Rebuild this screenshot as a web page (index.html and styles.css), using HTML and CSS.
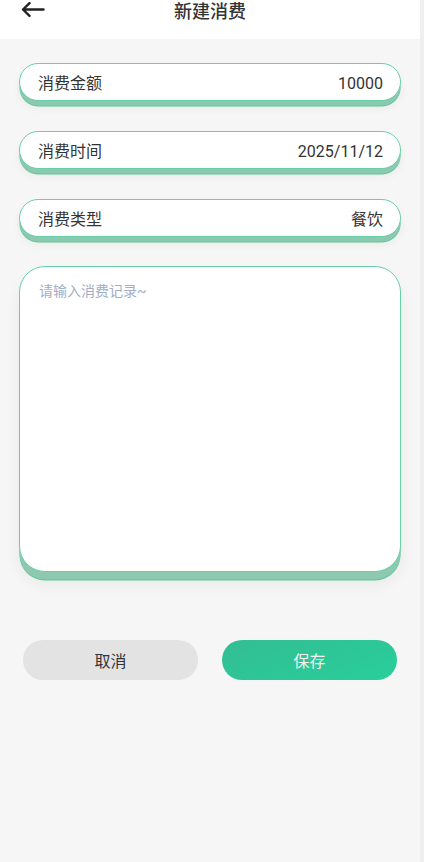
FILE: index.html
```html
<!DOCTYPE html>
<html lang="zh-CN">
<head>
<meta charset="utf-8">
<title>新建消费</title>
<link rel="stylesheet" href="styles.css">
</head>
<body>
<div class="screen">
  <div class="app">
    <header class="topbar">
      <button class="back" aria-label="返回">
        <svg width="24" height="16" viewBox="0 0 24 16"><path d="M22.5 7.5H2 M8.5 1.2L2 7.5l6.5 6.3" fill="none" stroke="#222" stroke-width="2.4" stroke-linecap="round" stroke-linejoin="round"/></svg>
      </button>
      <h1 class="title">新建消费</h1>
    </header>
    <main class="content">
      <div class="field">
        <span class="label">消费金额</span>
        <span class="value">10000</span>
      </div>
      <div class="field">
        <span class="label">消费时间</span>
        <span class="value">2025/11/12</span>
      </div>
      <div class="field">
        <span class="label">消费类型</span>
        <span class="value">餐饮</span>
      </div>
      <div class="memo">
        <span class="placeholder">请输入消费记录~</span>
      </div>
      <div class="actions">
        <button class="btn cancel">取消</button>
        <button class="btn save">保存</button>
      </div>
    </main>
  </div>
  <div class="rail"></div>
</div>
</body>
</html>
```
FILE: styles.css
```css
* { box-sizing: border-box; }
html, body { margin: 0; padding: 0; }
body {
  font-family: Roboto, "Noto Sans CJK SC", "Noto Sans", sans-serif;
  color: #333;
  background: #f6f6f6;
}
.screen {
  display: grid;
  grid-template-columns: 420px 4px;
  min-height: 862px;
}
.rail { background: #efefef; }
.app { background: #f6f6f6; }
.topbar {
  height: 39px;
  background: #fff;
  position: relative;
  display: flex;
  justify-content: center;
}
.back {
  position: absolute;
  left: 21px;
  top: 2px;
  border: 0;
  background: none;
  padding: 0;
  width: 24px;
  height: 16px;
}
.back svg { display: block; }
.title {
  margin: 0;
  font-size: 18px;
  font-weight: 500;
  line-height: 24px;
  color: #333;
}
.content {
  padding: 24px 19px 0;
  display: flex;
  flex-direction: column;
}
.field {
  height: 38px;
  border: 1.5px solid #66d0a6;
  border-radius: 19px;
  background: #fff;
  box-shadow: 0 5px 0 -0.5px #8cc9b0, 0 6px 0 -0.5px #5ec699, 0 7px 10px rgba(0,0,0,0.05);
  display: flex;
  align-items: center;
  justify-content: space-between;
  padding: 4px 17px 0 18px;
  margin-bottom: 30px;
  font-size: 16px;
}
.label, .value { color: #333; line-height: 20px; }
.memo {
  height: 306px;
  border: 1.5px solid #66d0a6;
  border-radius: 26px;
  background: #fff;
  box-shadow: 0 8px 0 -0.5px #8cc9b0, 0 9px 0 -0.5px #5ec699, 0 12px 16px rgba(0,0,0,0.06);
  padding: 14px 19px;
  margin-top: -1px;
}
.placeholder {
  font-size: 14px;
  color: #a3aec4;
  line-height: 18px;
}
.actions {
  margin-top: 68px;
  display: grid;
  grid-template-columns: 175px 175px;
  gap: 24px;
  padding-left: 4px;
}
.btn {
  height: 40px;
  border: 0;
  border-radius: 20px;
  font-family: inherit;
  font-size: 16px;
  padding: 0;
}
.cancel { background: #e3e3e3; color: #333; }
.save {
  background: linear-gradient(160deg, #33bd92 0%, #28cf9a 100%);
  color: #f2f2f2;
}
```
